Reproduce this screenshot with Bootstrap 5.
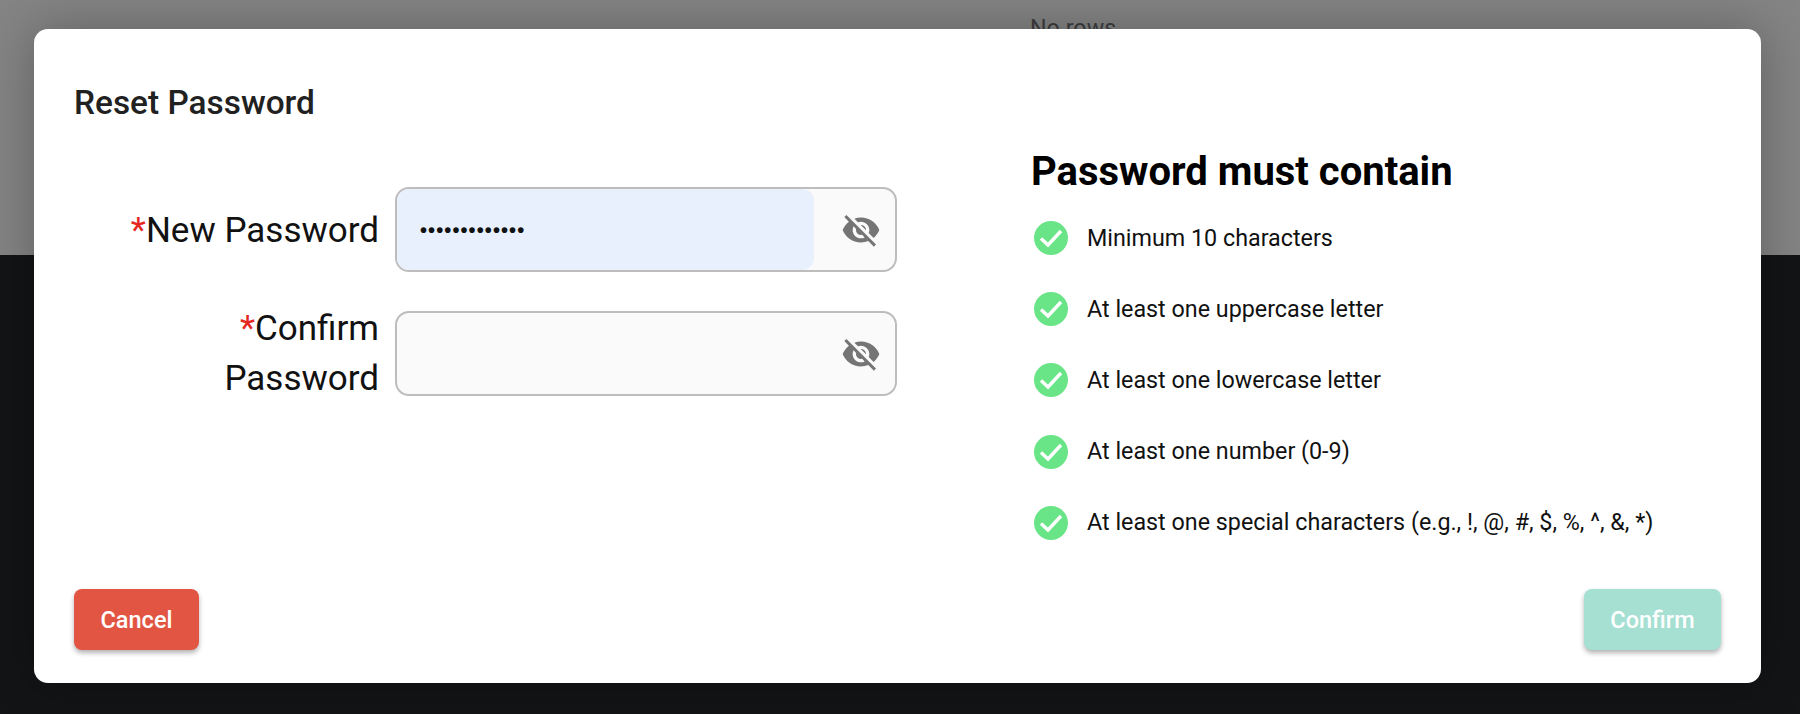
<!DOCTYPE html>
<html lang="en">
<head>
    <meta charset="UTF-8">
    <title>Reset Password</title>
    <link href="https://cdn.jsdelivr.net/npm/bootstrap@5.3.2/dist/css/bootstrap.min.css" rel="stylesheet">
    <style>
        html, body { height: 100%; }
        body {
            background: #131416;
            font-family: Roboto, "Liberation Sans", sans-serif;
            overflow: hidden;
            position: relative;
        }
        .page-top {
            position: absolute;
            top: 0; left: 0; right: 0;
            height: 255px;
            background: #848484;
        }
        .no-rows {
            position: absolute;
            left: 1030px; top: 11px;
            font-size: 23.3px;
            color: #3d3d3d;
        }
        .reset-dialog {
            position: relative;
            margin: 29px 39px 0 34px;
            height: 654px;
            background: #fff;
            border-radius: 14px;
            padding: 0 40px;
            box-shadow: 0 0 50px rgba(0,0,0,.28);
        }
        .dialog-title {
            font-size: 33.4px;
            font-weight: 500;
            color: #212121;
            line-height: 40px;
            padding-top: 54px;
            margin: 0;
        }
        .form-side { width: 823px; padding-top: 64px; }
        .field-row { gap: 16px; margin-bottom: 39px; height: 85px; }
        .field-label {
            width: 305px;
            font-size: 35px;
            line-height: 50px;
            color: #111;
            text-align: right;
            margin: 0;
            padding-left: 100px;
            padding-top: 2px;
        }
        .req { color: #e5281f; }
        .pw-box {
            width: 502px;
            height: 85px;
            border: 2px solid #bdbdbd;
            border-radius: 14px;
            background: #fafafa;
            overflow: hidden;
        }
        .pw-fill {
            flex: 1;
            align-self: stretch;
            padding-left: 23px;
            color: #111;
            border-radius: 0 12px 12px 0;
        }
        .pw-fill.filled { background: #e8f0fd; flex: none; width: 417px; }
        .pw-dots { font-size: 20px; letter-spacing: 1.1px; font-family: "Liberation Sans", sans-serif; font-weight: 700; }
        .eye-icon { width: 40px; height: 40px; margin-right: 14px; flex: none; }
        .rules-side { padding-left: 134px; padding-top: 24px; }
        .rules-title {
            font-size: 40px;
            font-weight: 700;
            line-height: 50px;
            color: #000;
            margin: 0 0 5.5px 0;
        }
        .rule-row {
            height: 71.2px;
            gap: 19px;
            font-size: 23.3px;
            color: #111;
            padding-left: 3px;
        }
        .check-icon { width: 34px; height: 34px; flex: none; }
        .dialog-actions {
            position: absolute;
            left: 40px; right: 40px; top: 560px;
        }
        .act-btn {
            height: 61px;
            font-size: 23.5px;
            font-weight: 500;
            color: #fff;
            border: 0;
            border-radius: 8px;
            box-shadow: 0 3px 5px rgba(0,0,0,.3);
            padding: 2px 0 0;
        }
        .act-cancel { width: 125px; background: #e25542; }
        .act-confirm { width: 137px; background: #a5e0d2; }
        .act-btn:hover, .act-btn:disabled { color: #fff; opacity: 1; }
        .act-cancel:hover { background: #e25542; }
        .act-confirm:disabled { background: #a5e0d2; }
    </style>
</head>
<body>
    <div class="page-top">
        <div class="no-rows">No rows</div>
    </div>

    <div class="reset-dialog">
        <h5 class="dialog-title">Reset Password</h5>

        <div class="d-flex">
            <div class="form-side">
                <div class="d-flex align-items-center field-row">
                    <label class="field-label text-nowrap ps-0"><span class="req">*</span>New Password</label>
                    <div class="pw-box d-flex align-items-center justify-content-between">
                        <div class="pw-fill filled d-flex align-items-center"><span class="pw-dots">•••••••••••••</span></div>
                        <svg class="eye-icon" viewBox="0 0 24 24" fill="#757575"><path d="M12 7c2.76 0 5 2.24 5 5 0 .65-.13 1.26-.36 1.83l2.92 2.92c1.51-1.26 2.7-2.89 3.43-4.75-1.73-4.39-6-7.5-11-7.5-1.4 0-2.74.25-3.98.7l2.16 2.16C10.74 7.13 11.35 7 12 7zM2 4.27l2.28 2.28.46.46C3.08 8.3 1.78 10.02 1 12c1.73 4.39 6 7.5 11 7.5 1.55 0 3.03-.3 4.38-.84l.42.42L19.73 22 21 20.73 3.27 3 2 4.27zM7.53 9.8l1.55 1.55c-.05.21-.08.43-.08.65 0 1.66 1.34 3 3 3 .22 0 .44-.03.65-.08l1.55 1.55c-.67.33-1.41.53-2.2.53-2.76 0-5-2.24-5-5 0-.79.2-1.53.53-2.2zm4.31-.78l3.15 3.15.02-.16c0-1.66-1.34-3-3-3l-.17.01z"/></svg>
                    </div>
                </div>
                <div class="d-flex align-items-center field-row">
                    <label class="field-label pt-0"><span class="req">*</span>Confirm Password</label>
                    <div class="pw-box d-flex align-items-center justify-content-between">
                        <div class="pw-fill"></div>
                        <svg class="eye-icon" viewBox="0 0 24 24" fill="#757575"><path d="M12 7c2.76 0 5 2.24 5 5 0 .65-.13 1.26-.36 1.83l2.92 2.92c1.51-1.26 2.7-2.89 3.43-4.75-1.73-4.39-6-7.5-11-7.5-1.4 0-2.74.25-3.98.7l2.16 2.16C10.74 7.13 11.35 7 12 7zM2 4.27l2.28 2.28.46.46C3.08 8.3 1.78 10.02 1 12c1.73 4.39 6 7.5 11 7.5 1.55 0 3.03-.3 4.38-.84l.42.42L19.73 22 21 20.73 3.27 3 2 4.27zM7.53 9.8l1.55 1.55c-.05.21-.08.43-.08.65 0 1.66 1.34 3 3 3 .22 0 .44-.03.65-.08l1.55 1.55c-.67.33-1.41.53-2.2.53-2.76 0-5-2.24-5-5 0-.79.2-1.53.53-2.2zm4.31-.78l3.15 3.15.02-.16c0-1.66-1.34-3-3-3l-.17.01z"/></svg>
                    </div>
                </div>
            </div>

            <div class="rules-side">
                <h2 class="rules-title">Password must contain</h2>
                <div class="d-flex align-items-center rule-row">
                    <svg class="check-icon" viewBox="0 0 34 34"><circle cx="17" cy="17" r="17" fill="#69e486"/><path d="M7 17.5l7 6.5L27 10" fill="none" stroke="#fff" stroke-width="3.4"/></svg>
                    <span>Minimum 10 characters</span>
                </div>
                <div class="d-flex align-items-center rule-row">
                    <svg class="check-icon" viewBox="0 0 34 34"><circle cx="17" cy="17" r="17" fill="#69e486"/><path d="M7 17.5l7 6.5L27 10" fill="none" stroke="#fff" stroke-width="3.4"/></svg>
                    <span>At least one uppercase letter</span>
                </div>
                <div class="d-flex align-items-center rule-row">
                    <svg class="check-icon" viewBox="0 0 34 34"><circle cx="17" cy="17" r="17" fill="#69e486"/><path d="M7 17.5l7 6.5L27 10" fill="none" stroke="#fff" stroke-width="3.4"/></svg>
                    <span>At least one lowercase letter</span>
                </div>
                <div class="d-flex align-items-center rule-row">
                    <svg class="check-icon" viewBox="0 0 34 34"><circle cx="17" cy="17" r="17" fill="#69e486"/><path d="M7 17.5l7 6.5L27 10" fill="none" stroke="#fff" stroke-width="3.4"/></svg>
                    <span>At least one number (0-9)</span>
                </div>
                <div class="d-flex align-items-center rule-row">
                    <svg class="check-icon" viewBox="0 0 34 34"><circle cx="17" cy="17" r="17" fill="#69e486"/><path d="M7 17.5l7 6.5L27 10" fill="none" stroke="#fff" stroke-width="3.4"/></svg>
                    <span>At least one special characters (e.g., !, @, #, $, %, ^, &amp;, *)</span>
                </div>
            </div>
        </div>

        <div class="dialog-actions d-flex justify-content-between">
            <button class="btn act-btn act-cancel">Cancel</button>
            <button class="btn act-btn act-confirm" disabled>Confirm</button>
        </div>
    </div>

    <script src="https://cdn.jsdelivr.net/npm/bootstrap@5.3.2/dist/js/bootstrap.bundle.min.js"></script>
</body>
</html>
